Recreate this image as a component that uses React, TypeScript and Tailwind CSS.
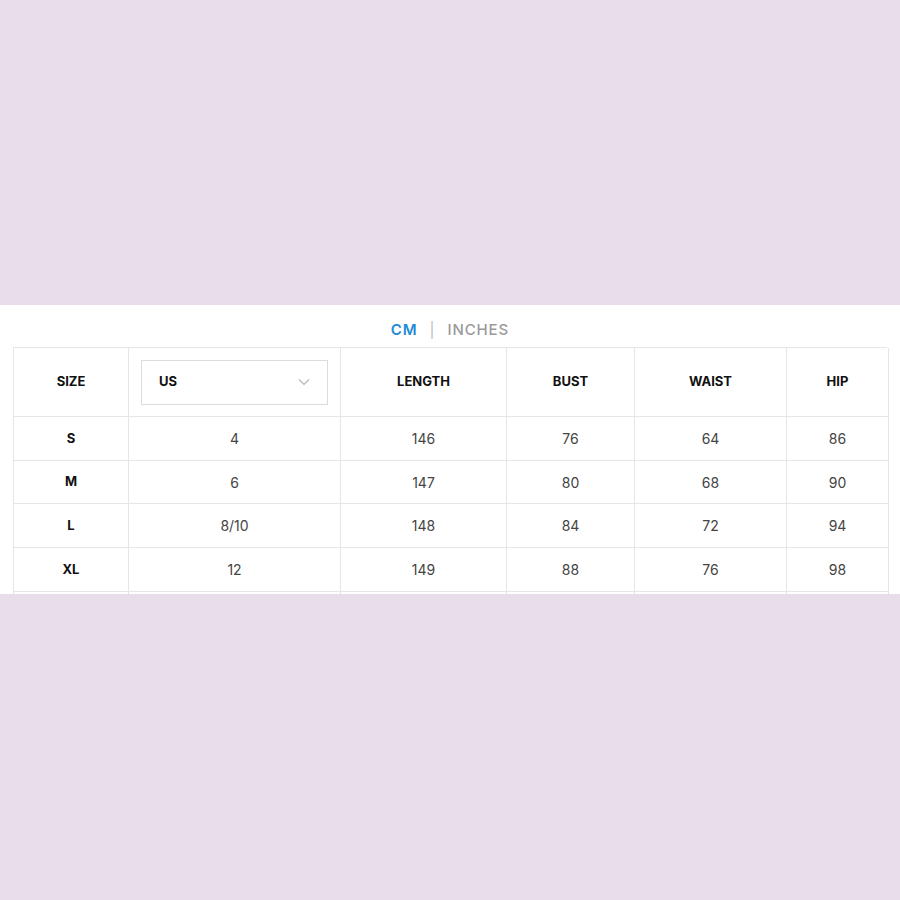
import React from "react";

const rows = [
  ["S", "4", "146", "76", "64", "86"],
  ["M", "6", "147", "80", "68", "90"],
  ["L", "8/10", "148", "84", "72", "94"],
  ["XL", "12", "149", "88", "76", "98"],
];

const cell = "flex items-center justify-center border-r border-b border-[#e6e6e6]";
const head = `${cell} h-[69px] text-[13px] font-bold text-[#111]`;

function App() {
  return (
    <div className="min-h-[900px] bg-[#e8dde9] pt-[305px] font-['Inter',sans-serif]">
      <div className="h-[289px] overflow-hidden bg-white pt-[15px]">
        <div className="mb-[7px] flex h-5 items-center justify-center gap-[12px] text-[15px] tracking-[0.06em]">
          <span className="font-semibold text-[#1d8ad6]">CM</span>
          <span className="text-[#bbbbbb]">|</span>
          <span className="font-medium text-[#9a9a9a]">INCHES</span>
        </div>
        <div className="mx-[13px] grid grid-cols-[115px_212px_166px_128px_152px_102px] border-l border-t border-[#e6e6e6]">
          <div className={head}>SIZE</div>
          <div className={`${cell} h-[69px] px-[12px]`}>
            <div className="flex h-[45px] w-full items-center justify-between border border-[#dcdcdc] px-[17px]">
              <span className="text-[13px] font-bold text-[#111]">US</span>
              <svg width="12" height="8" viewBox="0 0 12 8" fill="none" stroke="#b5b5b5" strokeWidth="1.2">
                <path d="M1 1.5 6 6.5 11 1.5" />
              </svg>
            </div>
          </div>
          <div className={head}>LENGTH</div>
          <div className={head}>BUST</div>
          <div className={head}>WAIST</div>
          <div className={head}>HIP</div>
          {rows.map((r, i) =>
            r.map((v, j) => (
              <div
                key={`${i}-${j}`}
                className={`${cell} ${i === 1 ? "h-[43px]" : "h-[44px]"} ${
                  j === 0 ? "text-[13px] font-bold text-[#111]" : "text-[14px] text-[#444]"
                }`}
              >
                {v}
              </div>
            ))
          )}
          {/* next row, cut off by the band */}
          {[0, 1, 2, 3, 4, 5].map((k) => (
            <div key={`more-${k}`} className={`${cell} h-[44px]`} />
          ))}
        </div>
      </div>
    </div>
  );
}

export default App;
